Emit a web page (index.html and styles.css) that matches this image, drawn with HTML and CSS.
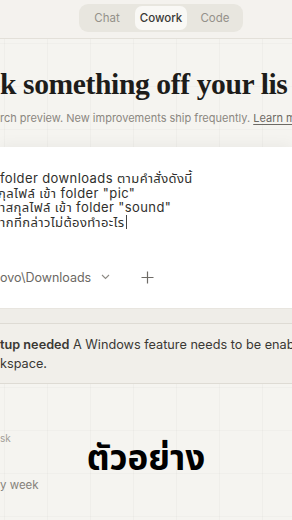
FILE: index.html
```html
<!DOCTYPE html>
<html lang="th">
<head>
    <meta charset="UTF-8">
    <meta name="viewport" content="width=device-width, initial-scale=1.0">
    <title>Cowork</title>
    <link rel="stylesheet" href="styles.css">
</head>
<body>
    <div class="page">
        <header class="topbar">
            <nav class="tabs">
                <span class="tab">Chat</span>
                <span class="tab active">Cowork</span>
                <span class="tab">Code</span>
            </nav>
        </header>

        <section class="hero">
            <h1 class="title">k something off your lis</h1>
            <p class="subtitle">rch preview. New improvements ship frequently. <a class="learn">Learn m</a></p>
        </section>

        <div class="composer">
            <div class="prompt">
                <div class="line">folder downloads ตามคำสั่งดังนี้</div>
                <div class="line shift">กุลไฟล์ เข้า folder "pic"</div>
                <div class="line">าสกุลไฟล์ เข้า folder "sound"</div>
                <div class="line">ากที่กล่าวไม่ต้องทำอะไร<span class="caret"></span></div>
            </div>
            <div class="composer-bar">
                <span class="folder">ovo\Downloads</span>
                <svg class="chev" width="9" height="6" viewBox="0 0 9 6"><path d="M1 1l3.5 3.5L8 1" fill="none" stroke="#8d8a84" stroke-width="1.1"/></svg>
                <svg class="plus" width="13" height="13" viewBox="0 0 13 13"><path d="M6.5 0.5v12M0.5 6.5h12" fill="none" stroke="#6e6b66" stroke-width="1.2"/></svg>
            </div>
        </div>

        <div class="strip"></div>
        <div class="notice">
            <p><b>tup needed</b> A Windows feature needs to be enab</p>
            <p>kspace.</p>
        </div>

        <div class="tasks">
            <div class="task-label">sk</div>
            <div class="task-item">y week</div>
        </div>

        <div class="watermark">ตัวอย่าง</div>
    </div>
</body>
</html>
```

FILE: styles.css
```css
* {
    box-sizing: border-box;
}
body {
    margin: 0;
    width: 292px;
    height: 520px;
    overflow: hidden;
    font-family: Inter, "Noto Sans Thai", "Noto Sans", sans-serif;
    background-color: #f4f2ee;
}
.page {
    position: relative;
    height: 520px;
    background-color: #f5f4f0;
    background-image:
        linear-gradient(to right, rgba(0, 0, 0, 0.022) 1px, transparent 1px),
        linear-gradient(to bottom, rgba(0, 0, 0, 0.018) 1px, transparent 1px);
    background-size: 43px 43px;
    background-position: 4px 0;
}
.topbar {
    height: 39px;
    padding-top: 4px;
    display: flex;
    justify-content: center;
    border-bottom: 1px solid #e3e0d9;
    background-color: #f4f2ee;
}
.tabs {
    display: flex;
    gap: 2px;
    padding: 2px;
    height: 28px;
    margin-left: 30px;
    border-radius: 9px;
    background-color: #e8e6df;
}
.tab {
    width: 52px;
    height: 24px;
    line-height: 24px;
    text-align: center;
    font-size: 11.5px;
    color: #94918a;
    border-radius: 7px;
}
.tab.active {
    background-color: #f9f8f5;
    color: #3a3936;
    font-weight: 500;
}
.hero {
    height: 108px;
    padding-top: 29px;
    white-space: nowrap;
    overflow: hidden;
}
.title {
    margin: 0;
    font-family: "Liberation Serif", serif;
    font-size: 29.6px;
    line-height: 32px;
    font-weight: bold;
    letter-spacing: -0.4px;
    color: #1d1c1a;
}
.subtitle {
    margin: 11px 0 0;
    font-size: 11px;
    color: #8b8780;
}
.learn {
    color: #6d6a64;
    text-decoration: underline;
    text-underline-offset: 2px;
}
.composer {
    height: 161px;
    padding-top: 24px;
    background-color: #ffffff;
    box-shadow: 0 -2px 14px rgba(0, 0, 0, 0.05);
    white-space: nowrap;
    overflow: hidden;
}
.line {
    font-size: 13px;
    line-height: 14.5px;
    letter-spacing: 0.4px;
    color: #302f2c;
}
.shift {
    margin-left: -2px;
}
.caret {
    display: inline-block;
    width: 1px;
    height: 14px;
    margin-left: 1px;
    vertical-align: -2px;
    background-color: #444;
}
.composer-bar {
    display: flex;
    align-items: center;
    margin-top: 41px;
    height: 14px;
}
.folder {
    font-size: 12.5px;
    color: #6b6863;
}
.chev {
    margin-left: 10px;
}
.plus {
    margin-left: 31px;
}
.strip {
    height: 15px;
    background-color: #efede8;
    border-top: 1px solid #e8e5df;
}
.notice {
    height: 61px;
    padding-top: 11px;
    background-color: #f1efea;
    border-top: 1px solid #dedbd4;
    border-bottom: 1px solid #dedbd4;
    white-space: nowrap;
    overflow: hidden;
}
.notice p {
    margin: 0;
    font-size: 12.7px;
    line-height: 19px;
    color: #3a3834;
}
.notice b {
    font-weight: 600;
}
.tasks {
    padding-top: 48px;
}
.task-label {
    font-size: 10px;
    color: #a29e97;
}
.task-item {
    margin-top: 34px;
    font-size: 11.5px;
    color: #86827b;
}
.watermark {
    position: absolute;
    left: 0;
    right: 0;
    top: 433px;
    text-align: center;
    font-family: "Noto Sans Thai", "Noto Sans", sans-serif;
    font-size: 35px;
    font-weight: bold;
    color: #000;
}
```
